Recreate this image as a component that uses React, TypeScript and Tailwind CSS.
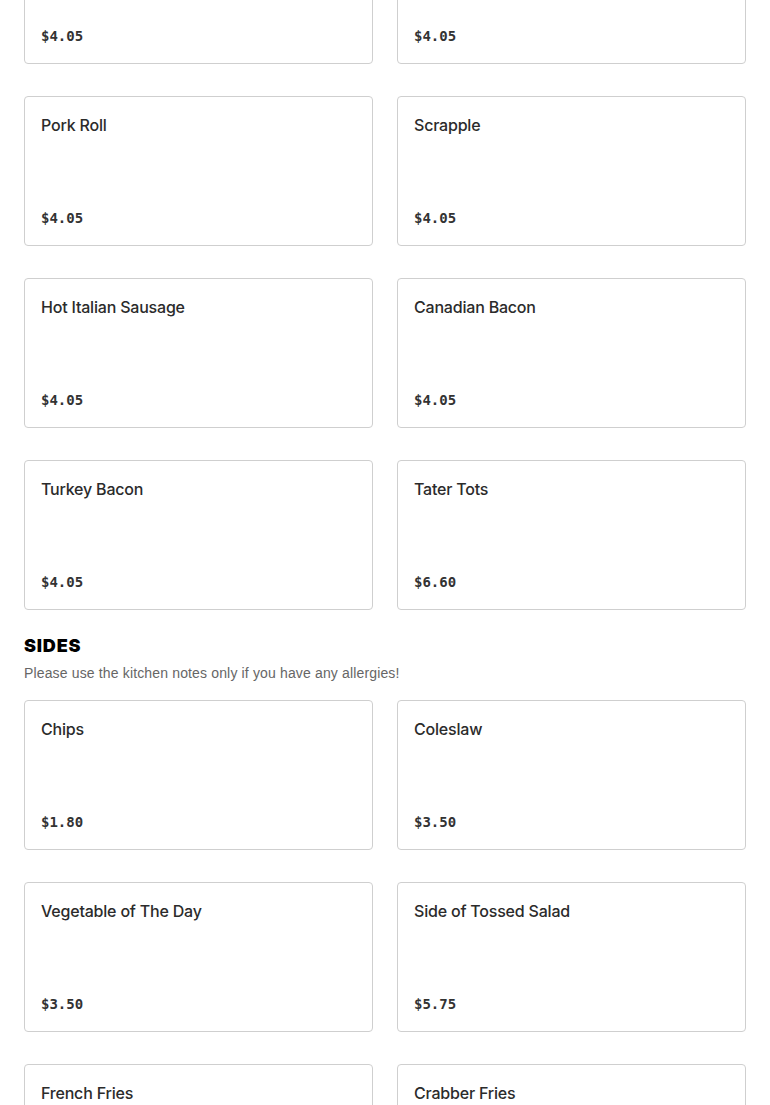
const sausages = [
  { name: "", price: "$4.05" },
  { name: "", price: "$4.05" },
  { name: "Pork Roll", price: "$4.05" },
  { name: "Scrapple", price: "$4.05" },
  { name: "Hot Italian Sausage", price: "$4.05" },
  { name: "Canadian Bacon", price: "$4.05" },
  { name: "Turkey Bacon", price: "$4.05" },
  { name: "Tater Tots", price: "$6.60" },
];

const sides = [
  { name: "Chips", price: "$1.80" },
  { name: "Coleslaw", price: "$3.50" },
  { name: "Vegetable of The Day", price: "$3.50" },
  { name: "Side of Tossed Salad", price: "$5.75" },
  { name: "French Fries", price: "$4.25" },
  { name: "Crabber Fries", price: "$6.50" },
];

const ItemCard = ({ name, price }: { name: string; price: string }) => (
  <div className="flex h-[150px] flex-col justify-between rounded-[4px] border border-[#cfcfcf] bg-white px-4 pt-4 pb-[15px]">
    <span className="text-[16px] font-medium leading-6 text-[#2b2b2b] font-['Inter',sans-serif] tracking-[-0.2px]">
      {name}
    </span>
    <span className="text-[14px] font-bold leading-6 text-[#333] font-['DejaVu_Sans_Mono',monospace]">
      {price}
    </span>
  </div>
);

const App = () => {
  return (
    <div className="min-h-screen overflow-hidden bg-white px-6 font-['Inter',sans-serif]">
      <div className="-mt-[86px] grid grid-cols-2 gap-x-6 gap-y-8">
        {sausages.map((item, i) => (
          <ItemCard key={i} {...item} />
        ))}
      </div>

      <section className="mt-6">
        <h2 className="text-[18px] font-black uppercase leading-6 tracking-[0.8px] text-black">
          Sides
        </h2>
        <p className="mt-[5px] mb-[17px] text-[14px] leading-5 text-[#666] font-['Liberation_Sans',sans-serif] tracking-[0.15px]">
          Please use the kitchen notes only if you have any allergies!
        </p>
        <div className="grid grid-cols-2 gap-x-6 gap-y-8">
          {sides.map((item, i) => (
            <ItemCard key={i} {...item} />
          ))}
        </div>
      </section>
    </div>
  );
};

export default App;
